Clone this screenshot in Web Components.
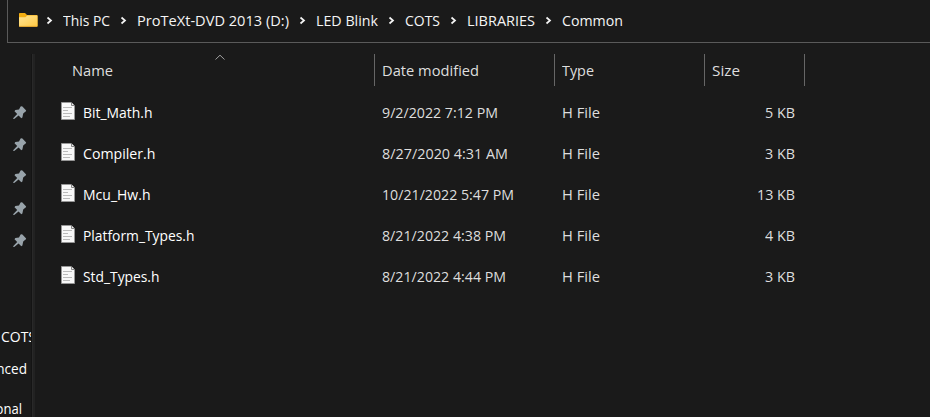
<!DOCTYPE html>
<html lang="en"><head><meta charset="utf-8"><title>Common</title>
<style>
html,body{margin:0;height:100%;background:#1a1a1a;overflow:hidden}
</style></head><body><file-explorer></file-explorer>
<script>
const define=(name,html,init)=>customElements.define(name,class extends HTMLElement{
  connectedCallback(){
    if(this.shadowRoot)return;
    this.attachShadow({mode:'open'}).innerHTML=html;
    if(init)init.call(this,this.shadowRoot);
  }
});

// Text label condensed or widened to the width given in its "w" attribute.
define('fit-text',`<style>
:host{display:block;flex:none;height:20px;line-height:20px;white-space:nowrap}
span{display:inline-block;transform-origin:0 50%}
</style><span><slot></slot></span>`,function(root){
  const w=+this.getAttribute('w'),s=root.querySelector('span');
  this.style.width=w+'px';
  s.style.transform=`scaleX(${w/s.getBoundingClientRect().width})`;
});

define('folder-icon',`<style>:host{display:block;width:19px;height:15px}svg{display:block}</style>
<svg width="19" height="15" viewBox="0 0 19 15"><defs><linearGradient id="g" x1="0" y1="0" x2="1" y2="1"><stop stop-color="#ffe495"/><stop offset="1" stop-color="#ffc943"/></linearGradient></defs>
<path d="M.8 0H6l2 2h10q.5 0 .5.6V13H0V.8Q0 0 .8 0z" fill="#f4ae12"/><path d="M0 4.3h6.4L8.3 2.6H18q.5 0 .5.6V13q0 .7-.6.7H.7Q0 13.700 0 13z" fill="url(#g)"/><path d="M.2 13.400h18.100" stroke="#e5a52a" stroke-width=".9"/></svg>`);

define('crumb-arrow',`<style>:host{display:flex;width:27px;height:20px;align-items:center;justify-content:center}</style>
<svg width="7" height="9" viewBox="0 0 7 9"><path d="M1.500 1.500L5 4.500 1.500 7.500" fill="none" stroke="#f4f4f4" stroke-width="1.700"/></svg>`);

define('pin-icon',`<style>:host{display:block;width:14px;height:14px}svg{display:block}</style>
<svg width="14" height="14" viewBox="0 0 14 14"><path d="M7.600.6Q8.500-.2 9.400.6L12.900 4.200Q13.400 5 12.600 5.500L10.200 7.600 9.400 11.600 8.300 12.200 5.600 9.600 1.200 13.100.2 13.100.4 12 4.200 8.100 1.500 5.300 2.300 4.100 6 3.600z" fill="#98a3aa"/></svg>`);

define('file-icon',`<style>:host{display:block;width:14px;height:18px;flex:none}svg{display:block}</style>
<svg width="14" height="18" viewBox="0 0 14 18"><path d="M.5.5H10L13.500 4V17.500H.5z" fill="#f8f8f8" stroke="#969696"/><path d="M10.500 .5V3.500h3" fill="#eee" stroke="#858585"/><path d="M2 5.500h9M2 8.500h5M2 11.500h9M2 14.500h7" stroke="#bababa"/></svg>`);

define('address-bar',`<style>
:host{display:flex;box-sizing:border-box;margin-left:7px;height:43px;border-left:1px solid #5a5a5a;border-bottom:1px solid #5a5a5a;padding:10px 0 0 11px;color:#f5f5f5}
folder-icon{margin:3px -2px 0 0}
</style><folder-icon></folder-icon><slot></slot>`);

define('side-pane',`<style>
:host{display:block;box-sizing:border-box;width:31px;height:363px;overflow:hidden;padding-top:52px;color:#fff}
.pins{display:grid;gap:18px;padding-left:13px;height:142px}
.label{height:20px;margin-top:78px;padding-left:1px}
.label+.label{margin-top:12px;padding:0}.label+.label+.label{margin-top:20px}
.right{display:flex;justify-content:flex-end}
</style><div class="pins">${'<pin-icon></pin-icon>'.repeat(5)}</div>
<div class="label"><fit-text w="35">COTS</fit-text></div>
<div class="label right" style="width:27px"><fit-text w="62">Advanced</fit-text></div>
<div class="label right" style="width:22px"><fit-text w="75">Professional</fit-text></div>`);

define('column-head',`<style>
:host{display:block;position:relative;box-sizing:border-box;height:32px;padding:6px 0 0 7px;border-right:1px solid #666;color:#dedede}
svg{position:absolute;left:180px;top:0}
</style><slot></slot>`,function(root){
  if(this.hasAttribute('sorted'))root.innerHTML+='<svg width="10" height="7" viewBox="0 0 10 7"><path d="M.5 5.500L5 1.200 9.500 5.500" fill="none" stroke="#a0a0a0"/></svg>';
});

define('file-row',`<style>
:host{display:grid;grid-template-columns:347px 180px 150px 83px;height:41px;align-items:center;color:#dedede}
.name{display:flex;color:#fff;gap:8px;padding-left:26px}
.size{display:flex;justify-content:flex-end}
</style><div class="name"><file-icon></file-icon><slot name="name"></slot></div><slot name="date"></slot><fit-text w="38">H File</fit-text><div class="size"><slot name="size"></slot></div>`);

define('file-list',`<style>
:host{display:block}
.head{display:grid;grid-template-columns:340px 180px 150px 100px;margin-bottom:5px}
column-head:first-child{padding-left:37px}
</style><div class="head">
<column-head sorted><fit-text w="41">Name</fit-text></column-head>
<column-head><fit-text w="97">Date modified</fit-text></column-head>
<column-head><fit-text w="32">Type</fit-text></column-head>
<column-head><fit-text w="28">Size</fit-text></column-head></div><slot></slot>`);

const files=[['Bit_Math.h',69.5,'9/2/2022 7:12 PM',116,'5 KB',30],['Compiler.h',72.5,'8/27/2020 4:31 AM',126,'3 KB',30],['Mcu_Hw.h',67.5,'10/21/2022 5:47 PM',132,'13 KB',38],['Platform_Types.h',111.5,'8/21/2022 4:38 PM',124,'4 KB',30],['Std_Types.h',76.5,'8/21/2022 4:44 PM',124,'3 KB',30]];
const crumbs=[['This PC',47],['ProTeXt-DVD 2013 (D:)',152],['LED Blink',62],['COTS',35],['LIBRARIES',68],['Common',61]];
define('file-explorer',`<style>
:host{display:block;height:417px;overflow:hidden;font:14.800px "Open Sans","Noto Sans",sans-serif;background:#1a1a1a}
.body{display:grid;grid-template-columns:31px 4px 1fr;margin-top:11px;height:363px}
.split{background:linear-gradient(90deg,#141414 1px,#292929 1px 2px,#222 2px)}
</style><address-bar>${crumbs.map(c=>`<crumb-arrow></crumb-arrow><fit-text w="${c[1]}">${c[0]}</fit-text>`).join('')}</address-bar>
<div class="body"><side-pane></side-pane><div class="split"></div><file-list>${files.map(f=>`<file-row><fit-text slot="name" w="${f[1]}">${f[0]}</fit-text><fit-text slot="date" w="${f[3]}">${f[2]}</fit-text><fit-text slot="size" w="${f[5]}">${f[4]}</fit-text></file-row>`).join('')}</file-list></div>`);
</script></body></html>
